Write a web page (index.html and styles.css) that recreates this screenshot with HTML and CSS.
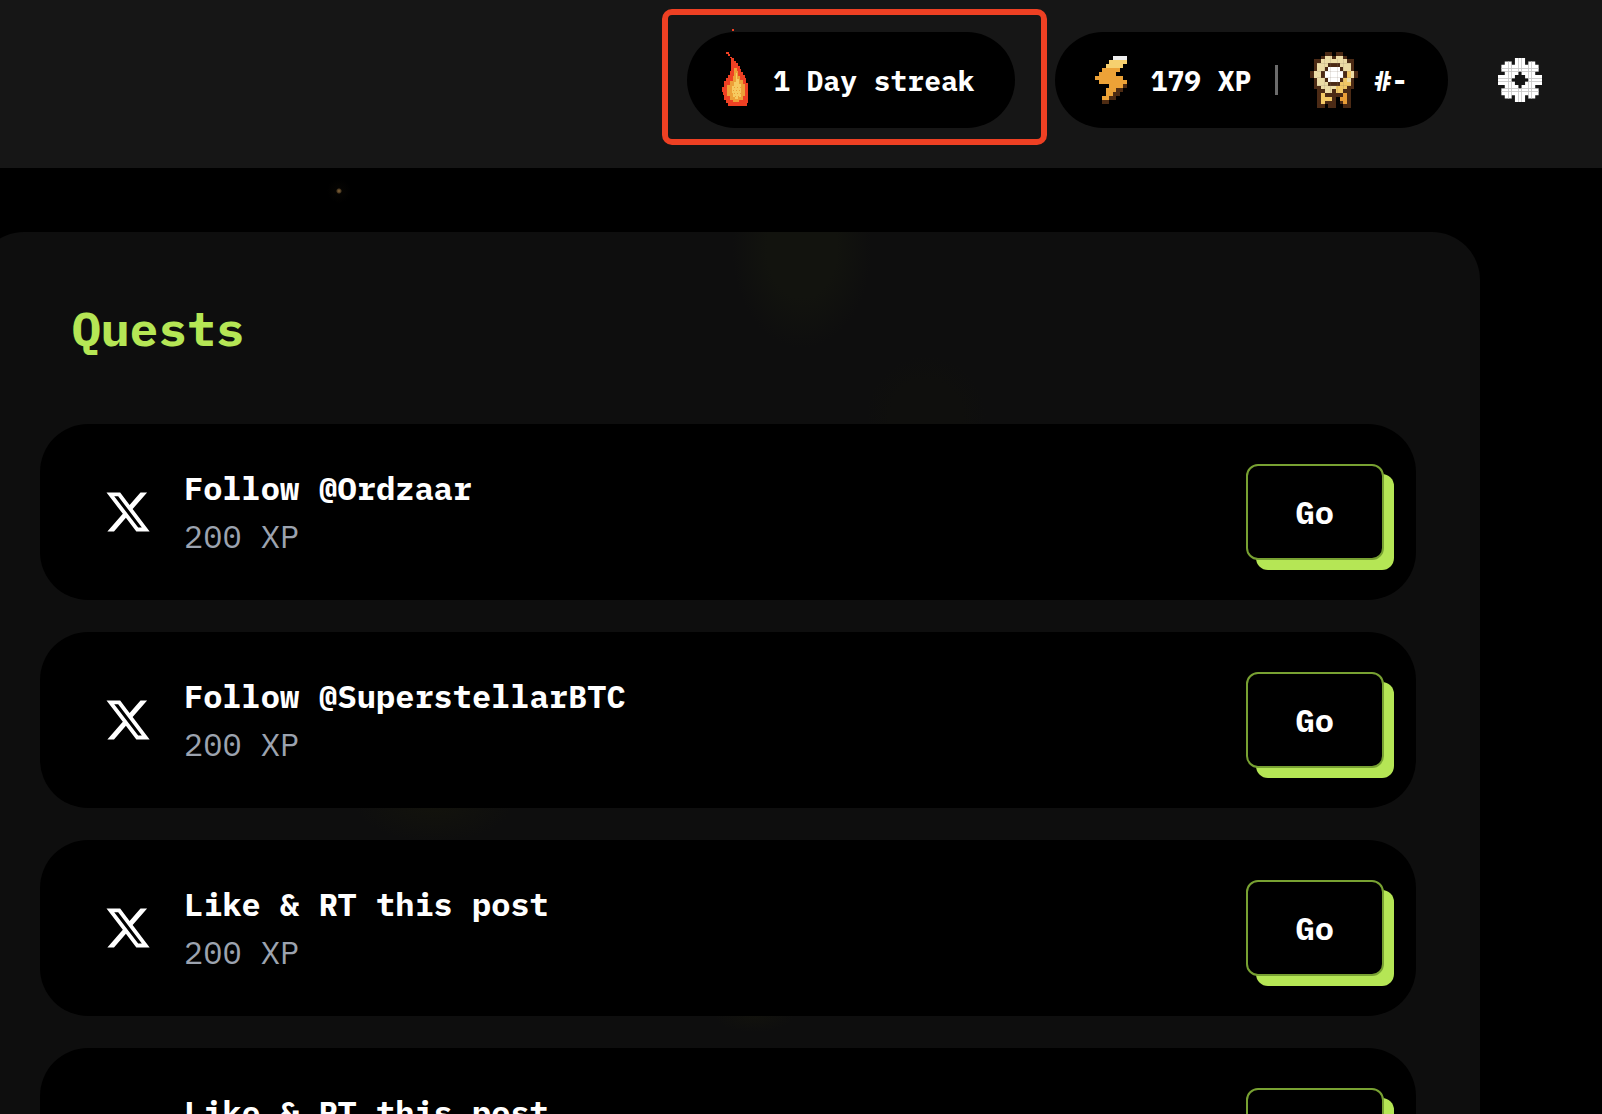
FILE: index.html
```html
<!DOCTYPE html>
<html lang="en">
<head>
  <meta charset="UTF-8">
  <title>Quests</title>
  <link rel="stylesheet" href="styles.css">
</head>
<body>

  <svg class="sprites" aria-hidden="true">
    <symbol id="x-logo" viewBox="0 0 24 24">
      <path fill="currentColor" d="M18.244 2.25h3.308l-7.227 8.26 8.502 11.24H16.17l-5.214-6.817L4.99 21.75H1.68l7.73-8.835L1.254 2.25H8.08l4.713 6.231zm-1.161 17.52h1.833L7.084 4.126H5.117z"/>
    </symbol>
  </svg>

  <header class="topbar">
    <div class="pill streak">
      <svg class="fire" viewBox="0 0 30 56" shape-rendering="crispEdges" aria-hidden="true">
        <path fill="#ee4023" d="M13 -23h2v2h-2zM7 0h3v2h1v3h2v1h2v3h2v2h2v3h2v3h1v3h2v3h2v3h1v5h2v20h-1v3H9v-3H7v-3H5v-5H4v-3H3v-5h2v-6h2v-3h2v-3h2v-4h1V6h-1V4H9V2H7z"/>
        <path fill="#ed9f37" d="M15 16h3v3h1v5h2v4h3v4h2v12h-2v4h-4v2h-6v-2h-3v-4H8V33h3v-4h3v-5h1z"/>
        <path fill="#f6ca60" d="M17 21h1v6h2v5h2v13h-3v2h-3v-2h-2v-4h-1v-7h2v-4h2z"/>
        <path stroke="#ed9f37" stroke-dasharray="1 2" d="M15 35h7M14 38h8M15 41h7M16 44h6"/>
      </svg>
      <span>1 Day streak</span>
    </div>

    <div class="pill stats">
      <svg class="bolt" viewBox="0 0 9 12" preserveAspectRatio="none" shape-rendering="crispEdges" aria-hidden="true">
        <path fill="#eeeeee" d="M5 0h4v1H5z"/>
        <path fill="#f6d06f" d="M4 1h5v1H8v1H3V2h1z"/>
        <path fill="#eca237" d="M2 3h5v1H6v1h2v1h1v1H8v1H7v1H6v1H5v1H4v1H2v-1h1V8h1V7H1V6H0V5h1V4h1z"/>
        <path fill="#4e2c13" d="M8 7h1v1H8v1H7v1H6v1H4v1H2v-1h2v-1h1V9h1V8h1V7z"/>
        <path fill="#eca237" d="M5 7h3v1H5zM2 10h2v1H2z"/>
      </svg>
      <span>179 XP</span>
      <span class="divider"></span>
      <svg class="badge" viewBox="0 0 13 15" preserveAspectRatio="none" shape-rendering="crispEdges" aria-hidden="true">
        <path fill="#4b2a15" d="M4 0h2v1h1V0h2v1h1v1h2v3h1v2h-1v3h-1v5H9v-1H8v-2H7v3H5v-1H4v1H2v-5H1V7H0V5h1V2h2V1h1z"/>
        <path fill="#ecdca6" d="M4 1h2v1h1V1h2v1h1v1h1v2h1v2h-1v2h-1v1H8v1H7v-1H6v1H4v-1H3V9H2V7H1V5h1V3h1V2h1z"/>
        <path fill="#f2c865" d="M9 7h1v1h1v1h-1v1H9v1H7V9h1V8h1zM3 11h1v1h2v1H4v1H3zM10 5h1v2h-1z"/>
        <path fill="#e99d37" d="M9 11h1v3H9v-1H8v-1h1z"/>
        <path fill="#4b2a15" d="M5 3h3v1h1v1h1v2H9v1H8v1H5V8H4V7H3V5h1V4h1z"/>
        <path fill="#ffffff" d="M5 4h3v1h1v2H8v1H5V7H4V5h1z"/>
        <path stroke="#8a7868" stroke-opacity=".25" stroke-width=".2" fill="none" d="M3.9 2v8M5.5 1v10M7.4 2v9M9.2 2v8M2 3.1h9M2 5.1h9M2 6.9h9M2 9.1h9"/>
      </svg>
      <span>#-</span>
    </div>

    <button class="settings" aria-label="Settings">
      <svg viewBox="0 0 13 13" shape-rendering="crispEdges" aria-hidden="true">
        <clipPath id="gear-shape">
          <path clip-rule="evenodd" d="M5 0h3v2h1V1h2v1h1v2h-1v1h2v3h-2v1h1v2h-1v1H9v-1H8v2H5v-2H4v1H2v-1H1V9h1V8H0V5h2V4H1V2h1V1h2v1h1zM6 4v1H5v1H4v1h1v1h1v1h1V8h1V7h1V6H8V5H7V4z"/>
        </clipPath>
        <g clip-path="url(#gear-shape)">
          <path fill="#ffffff" d="M0 0h13v13H0z"/>
          <path stroke="#c8c8c8" stroke-width=".25" d="M3.1 0v13M4 0v13M6.1 0v13M7 0v13M9 0v13M9.9 0v13M0 3.1h13M0 4h13M0 6.1h13M0 7h13M0 9h13M0 9.9h13"/>
        </g>
      </svg>
    </button>
  </header>

  <main class="content">
    <section class="panel">
      <h1>Quests</h1>
      <ul class="quests">
        <li class="quest">
          <svg class="quest-icon" aria-hidden="true"><use href="#x-logo"/></svg>
          <div class="quest-text">
            <h2>Follow @Ordzaar</h2>
            <p>200 XP</p>
          </div>
          <button class="go">Go</button>
        </li>
        <li class="quest">
          <svg class="quest-icon" aria-hidden="true"><use href="#x-logo"/></svg>
          <div class="quest-text">
            <h2>Follow @SuperstellarBTC</h2>
            <p>200 XP</p>
          </div>
          <button class="go">Go</button>
        </li>
        <li class="quest">
          <svg class="quest-icon" aria-hidden="true"><use href="#x-logo"/></svg>
          <div class="quest-text">
            <h2>Like &amp; RT this post</h2>
            <p>200 XP</p>
          </div>
          <button class="go">Go</button>
        </li>
        <li class="quest">
          <svg class="quest-icon" aria-hidden="true"><use href="#x-logo"/></svg>
          <div class="quest-text">
            <h2>Like &amp; RT this post</h2>
            <p>200 XP</p>
          </div>
          <button class="go">Go</button>
        </li>
      </ul>
    </section>
  </main>

</body>
</html>
```

FILE: styles.css
```css
* {
  box-sizing: border-box;
}

body {
  margin: 0;
  height: 100vh;
  overflow: hidden;
  background-color: #000;
  color: #fff;
  font-family: "IBM Plex Mono", "Liberation Mono", monospace;
}

h1, h2, p, ul {
  margin: 0;
  padding: 0;
}

button {
  font-family: inherit;
  color: inherit;
  cursor: pointer;
}

.sprites {
  display: none;
}

/* top bar */
.topbar {
  display: flex;
  justify-content: flex-end;
  align-items: center;
  gap: 40px;
  padding: 32px 60px 40px;
  background-color: #161616;
}

.pill {
  display: flex;
  align-items: center;
  height: 96px;
  border-radius: 48px;
  background-color: #000;
  font-size: 28px;
  font-weight: bold;
  white-space: nowrap;
}

.streak {
  position: relative;
  gap: 24px;
  padding: 0 40px 0 32px;
}

/* highlight frame around the streak */
.streak::after {
  content: "";
  position: absolute;
  inset: -23px -32px -17px -25px;
  border: 6px solid #ee4023;
  border-radius: 10px;
}

.stats {
  padding: 0 40px;
}

.fire {
  width: 30px;
  height: 56px;
  overflow: visible;
}

.bolt {
  width: 32px;
  height: 48px;
  margin-right: 24px;
}

.divider {
  width: 3px;
  height: 30px;
  margin: 0 32px 0 24px;
  background-color: #6b6b6b;
}

.badge {
  width: 48px;
  height: 56px;
  margin-right: 16px;
}

.settings {
  margin-left: 10px;
  padding: 0;
  border: none;
  background: none;
}

.settings svg {
  display: block;
  width: 44px;
  height: 44px;
}

/* quests */
.content {
  padding: 64px 122px 64px 0;
  background: radial-gradient(circle at 339px 23px, #8a6a3c 0, #4a3820 2px, #050402 3px, transparent 12px);
}

.panel {
  margin-left: -24px;
  padding: 64px;
  border-radius: 48px;
  background:
    radial-gradient(ellipse 70px 100px at 826px 16px, #12130e 50%, transparent),
    radial-gradient(circle 60px at 950px 184px, #0f0f0d 60%, transparent),
    radial-gradient(ellipse 80px 40px at 458px 570px, #13130c, transparent),
    radial-gradient(ellipse 40px 16px at 778px 784px, #12120d, transparent),
    #0e0e0e;
}

h1 {
  padding: 0 32px 64px;
  color: #b5e655;
  font-size: 48px;
  line-height: 64px;
}

.quests {
  display: flex;
  flex-direction: column;
  gap: 32px;
  list-style: none;
}

.quest {
  display: flex;
  align-items: center;
  gap: 32px;
  height: 176px;
  padding: 0 32px 0 64px;
  border-radius: 48px;
  background-color: #000;
}

.quest-icon {
  width: 48px;
  height: 48px;
}

.quest-text {
  flex: 1;
  font-size: 32px;
  line-height: 48px;
}

.quest-text h2 {
  font-size: 32px;
}

.quest-text p {
  color: #9ca3af;
}

.go {
  height: 96px;
  padding: 0 48px;
  border: 2px solid #78a132;
  border-radius: 12px;
  background-color: #000;
  box-shadow: 10px 10px 0 #b5e655;
  font-size: 32px;
  font-weight: bold;
}
```
